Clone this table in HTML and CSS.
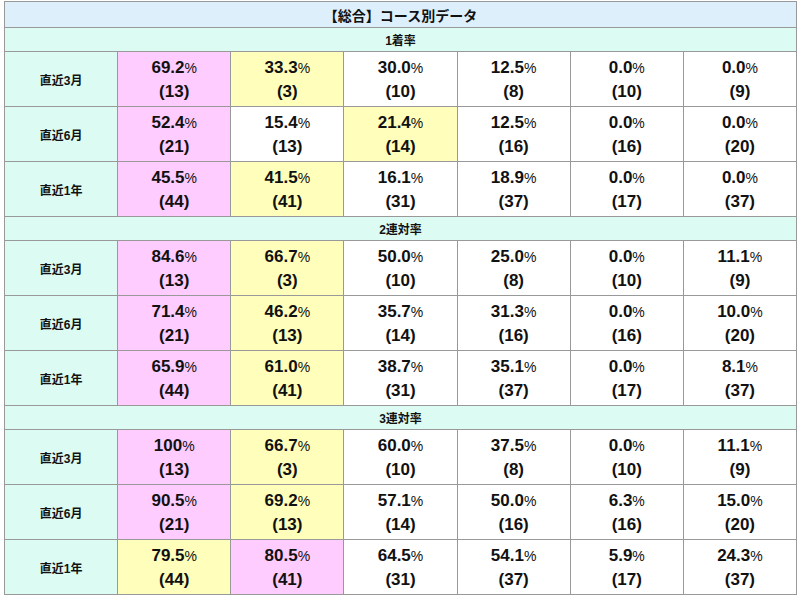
FILE: index.html
```html
<!DOCTYPE html>
<html lang="ja">
<head>
<meta charset="utf-8">
<title>【総合】コース別データ</title>
<link rel="stylesheet" href="styles.css">
</head>
<body>
<div class="grid">
  <div class="title">【総合】コース別データ</div>

  <div class="sect">1着率</div>
  <div class="lbl">直近3月</div>
  <div class="cell pink"><span class="v">69.2<small>%</small></span><span class="n">(13)</span></div>
  <div class="cell yellow"><span class="v">33.3<small>%</small></span><span class="n">(3)</span></div>
  <div class="cell"><span class="v">30.0<small>%</small></span><span class="n">(10)</span></div>
  <div class="cell"><span class="v">12.5<small>%</small></span><span class="n">(8)</span></div>
  <div class="cell"><span class="v">0.0<small>%</small></span><span class="n">(10)</span></div>
  <div class="cell"><span class="v">0.0<small>%</small></span><span class="n">(9)</span></div>

  <div class="lbl">直近6月</div>
  <div class="cell pink"><span class="v">52.4<small>%</small></span><span class="n">(21)</span></div>
  <div class="cell"><span class="v">15.4<small>%</small></span><span class="n">(13)</span></div>
  <div class="cell yellow"><span class="v">21.4<small>%</small></span><span class="n">(14)</span></div>
  <div class="cell"><span class="v">12.5<small>%</small></span><span class="n">(16)</span></div>
  <div class="cell"><span class="v">0.0<small>%</small></span><span class="n">(16)</span></div>
  <div class="cell"><span class="v">0.0<small>%</small></span><span class="n">(20)</span></div>

  <div class="lbl">直近1年</div>
  <div class="cell pink"><span class="v">45.5<small>%</small></span><span class="n">(44)</span></div>
  <div class="cell yellow"><span class="v">41.5<small>%</small></span><span class="n">(41)</span></div>
  <div class="cell"><span class="v">16.1<small>%</small></span><span class="n">(31)</span></div>
  <div class="cell"><span class="v">18.9<small>%</small></span><span class="n">(37)</span></div>
  <div class="cell"><span class="v">0.0<small>%</small></span><span class="n">(17)</span></div>
  <div class="cell"><span class="v">0.0<small>%</small></span><span class="n">(37)</span></div>

  <div class="sect">2連対率</div>
  <div class="lbl">直近3月</div>
  <div class="cell pink"><span class="v">84.6<small>%</small></span><span class="n">(13)</span></div>
  <div class="cell yellow"><span class="v">66.7<small>%</small></span><span class="n">(3)</span></div>
  <div class="cell"><span class="v">50.0<small>%</small></span><span class="n">(10)</span></div>
  <div class="cell"><span class="v">25.0<small>%</small></span><span class="n">(8)</span></div>
  <div class="cell"><span class="v">0.0<small>%</small></span><span class="n">(10)</span></div>
  <div class="cell"><span class="v">11.1<small>%</small></span><span class="n">(9)</span></div>

  <div class="lbl">直近6月</div>
  <div class="cell pink"><span class="v">71.4<small>%</small></span><span class="n">(21)</span></div>
  <div class="cell yellow"><span class="v">46.2<small>%</small></span><span class="n">(13)</span></div>
  <div class="cell"><span class="v">35.7<small>%</small></span><span class="n">(14)</span></div>
  <div class="cell"><span class="v">31.3<small>%</small></span><span class="n">(16)</span></div>
  <div class="cell"><span class="v">0.0<small>%</small></span><span class="n">(16)</span></div>
  <div class="cell"><span class="v">10.0<small>%</small></span><span class="n">(20)</span></div>

  <div class="lbl">直近1年</div>
  <div class="cell pink"><span class="v">65.9<small>%</small></span><span class="n">(44)</span></div>
  <div class="cell yellow"><span class="v">61.0<small>%</small></span><span class="n">(41)</span></div>
  <div class="cell"><span class="v">38.7<small>%</small></span><span class="n">(31)</span></div>
  <div class="cell"><span class="v">35.1<small>%</small></span><span class="n">(37)</span></div>
  <div class="cell"><span class="v">0.0<small>%</small></span><span class="n">(17)</span></div>
  <div class="cell"><span class="v">8.1<small>%</small></span><span class="n">(37)</span></div>

  <div class="sect">3連対率</div>
  <div class="lbl">直近3月</div>
  <div class="cell pink"><span class="v">100<small>%</small></span><span class="n">(13)</span></div>
  <div class="cell yellow"><span class="v">66.7<small>%</small></span><span class="n">(3)</span></div>
  <div class="cell"><span class="v">60.0<small>%</small></span><span class="n">(10)</span></div>
  <div class="cell"><span class="v">37.5<small>%</small></span><span class="n">(8)</span></div>
  <div class="cell"><span class="v">0.0<small>%</small></span><span class="n">(10)</span></div>
  <div class="cell"><span class="v">11.1<small>%</small></span><span class="n">(9)</span></div>

  <div class="lbl">直近6月</div>
  <div class="cell pink"><span class="v">90.5<small>%</small></span><span class="n">(21)</span></div>
  <div class="cell yellow"><span class="v">69.2<small>%</small></span><span class="n">(13)</span></div>
  <div class="cell"><span class="v">57.1<small>%</small></span><span class="n">(14)</span></div>
  <div class="cell"><span class="v">50.0<small>%</small></span><span class="n">(16)</span></div>
  <div class="cell"><span class="v">6.3<small>%</small></span><span class="n">(16)</span></div>
  <div class="cell"><span class="v">15.0<small>%</small></span><span class="n">(20)</span></div>

  <div class="lbl">直近1年</div>
  <div class="cell yellow"><span class="v">79.5<small>%</small></span><span class="n">(44)</span></div>
  <div class="cell pink"><span class="v">80.5<small>%</small></span><span class="n">(41)</span></div>
  <div class="cell"><span class="v">64.5<small>%</small></span><span class="n">(31)</span></div>
  <div class="cell"><span class="v">54.1<small>%</small></span><span class="n">(37)</span></div>
  <div class="cell"><span class="v">5.9<small>%</small></span><span class="n">(17)</span></div>
  <div class="cell"><span class="v">24.3<small>%</small></span><span class="n">(37)</span></div>
</div>
</body>
</html>
```
FILE: styles.css
```css
html, body {
  margin: 0;
  padding: 0;
  background: #ffffff;
}
body {
  padding: 1px 0 0 4px;
  font-family: "Liberation Sans", "Noto Sans CJK JP", sans-serif;
  color: #111111;
}
.grid {
  box-sizing: border-box;
  width: 793px;
  display: grid;
  grid-template-columns: repeat(7, 1fr);
  gap: 1px;
  background: #999999;
  border: 1px solid #999999;
}
.title {
  grid-column: 1 / -1;
  height: 25px;
  background: #ddeffb;
  display: flex;
  align-items: center;
  justify-content: center;
  font-size: 14px;
  font-weight: bold;
}
.sect {
  grid-column: 1 / -1;
  height: 23px;
  background: #dcfcf3;
  display: flex;
  align-items: center;
  justify-content: center;
  font-size: 12px;
  font-weight: bold;
}
.lbl {
  height: 54px;
  background: #dcfcf3;
  display: flex;
  align-items: center;
  justify-content: center;
  font-size: 12px;
  font-weight: bold;
}
.cell {
  height: 54px;
  background: #ffffff;
  display: flex;
  flex-direction: column;
  align-items: center;
  justify-content: center;
  font-size: 17px;
  font-weight: bold;
  line-height: 23px;
}
.cell small {
  font-size: 14px;
  font-weight: normal;
}
.pink { background: #ffccff; }
.yellow { background: #ffffbb; }
```
